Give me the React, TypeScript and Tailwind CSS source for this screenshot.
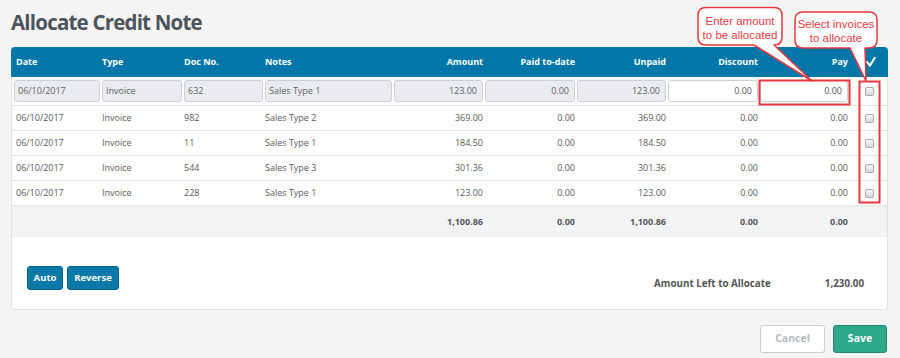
import React from "react";

const rows = [
  ["06/10/2017", "Invoice", "982", "Sales Type 2", "369.00"],
  ["06/10/2017", "Invoice", "11", "Sales Type 1", "184.50"],
  ["06/10/2017", "Invoice", "544", "Sales Type 3", "301.36"],
  ["06/10/2017", "Invoice", "228", "Sales Type 1", "123.00"],
];

const GRID = "grid grid-cols-[88px_82px_81px_129px_91px_92px_91px_92px_90px_1fr]";

function Box() {
  return (
    <div className="w-[9px] h-[9px] rounded-[2px] border border-[#a9a9a9] bg-linear-to-b from-[#f6f6f6] to-[#d8d8d8]" />
  );
}

function Inp({ v, right, white }: { v: string; right?: boolean; white?: boolean }) {
  return (
    <div className="pr-[2px] flex items-center">
      <div
        className={
          "h-[22px] w-full rounded-[3px] border flex items-center text-[9px] " +
          (white ? "bg-white border-[#cfcfcf] text-[#555] " : "bg-[#e9ebee] border-[#ccd1d6] text-[#5f6368] ") +
          (right ? "justify-end pr-[5px]" : "pl-[3px]")
        }
      >
        {v}
      </div>
    </div>
  );
}

export default function App() {
  const red = "#e5393f";
  return (
    <div
      className="relative w-[900px] h-[358px] overflow-hidden bg-[#f4f4f4]"
      style={{ fontFamily: '"Open Sans", "Noto Sans", sans-serif' }}
    >
      <div className="pt-[8px] pl-[11px]">
        <h1 className="text-[20.5px] leading-[28px] font-bold tracking-[-0.8px] text-[#4d545c]">
          Allocate Credit Note
        </h1>
      </div>

      <div className="mt-[11px] ml-[11px] w-[877px] flex flex-col">
        {/* header */}
        <div className={GRID + " h-[30px] items-center bg-[#0077a8] rounded-t-[4px] pl-[3px] text-white text-[9px] font-bold"}>
          <div className="pl-[2px]">Date</div>
          <div>Type</div>
          <div>Doc No.</div>
          <div>Notes</div>
          <div className="text-right pr-[2px]">Amount</div>
          <div className="text-right pr-[2px]">Paid to-date</div>
          <div className="text-right pr-[2px]">Unpaid</div>
          <div className="text-right pr-[2px]">Discount</div>
          <div className="text-right pr-[2px]">Pay</div>
          <div className="pl-[16px] flex items-center">
            <svg width="10" height="10" viewBox="0 0 10 10">
              <path d="M1.3 5.2 L3.8 8.6 L8.8 0.8" fill="none" stroke="white" strokeWidth="2.1" strokeLinecap="round" strokeLinejoin="round" />
            </svg>
          </div>
        </div>

        {/* body */}
        <div className="bg-white border-x border-b border-[#e1e1e1] rounded-b-[4px]">
          <div className={GRID + " h-[29px] items-center pl-[2px] border-b border-[#e4e4e4]"}>
            <Inp v="06/10/2017" />
            <Inp v="Invoice" />
            <Inp v="632" />
            <Inp v="Sales Type 1" />
            <Inp v="123.00" right />
            <Inp v="0.00" right />
            <Inp v="123.00" right />
            <Inp v="0.00" right white />
            <Inp v="0.00" right white />
            <div className="pl-[15px] flex items-center"><Box /></div>
          </div>

          {rows.map((r, i) => (
            <div key={i} className={GRID + " h-[25px] items-center pl-[2px] border-b border-[#e4e4e4] text-[9px] text-[#5a5a5a]"}>
              <div className="pl-[2px]">{r[0]}</div>
              <div>{r[1]}</div>
              <div>{r[2]}</div>
              <div>{r[3]}</div>
              <div className="text-right pr-[2px]">{r[4]}</div>
              <div className="text-right pr-[2px]">0.00</div>
              <div className="text-right pr-[2px]">{r[4]}</div>
              <div className="text-right pr-[2px]">0.00</div>
              <div className="text-right pr-[2px]">0.00</div>
              <div className="pl-[15px] flex items-center"><Box /></div>
            </div>
          ))}

          <div className={GRID + " h-[31px] items-center pl-[2px] bg-[#f2f3f5] text-[9px] font-bold text-[#555]"}>
            <div />
            <div />
            <div />
            <div />
            <div className="text-right pr-[2px]">1,100.86</div>
            <div className="text-right pr-[2px]">0.00</div>
            <div className="text-right pr-[2px]">1,100.86</div>
            <div className="text-right pr-[2px]">0.00</div>
            <div className="text-right pr-[2px]">0.00</div>
            <div />
          </div>

          <div className="h-[72px] flex items-start pt-[29px] pl-[15px] pr-[23px]">
            <div className="flex gap-[4px]">
              <button className="h-[24px] w-[36px] rounded-[3px] bg-[#0a78a8] border border-[#06628b] text-white text-[9.5px] font-bold">
                Auto
              </button>
              <button className="h-[24px] w-[52px] rounded-[3px] bg-[#0a78a8] border border-[#06628b] text-white text-[9.5px] font-bold">
                Reverse
              </button>
            </div>
            <div className="ml-auto mt-[12px] flex items-center gap-[54px] text-[9.8px] leading-[12px] font-bold text-[#555]">
              <span>Amount Left to Allocate</span>
              <span>1,230.00</span>
            </div>
          </div>
        </div>
      </div>

      <div className="mt-[15px] flex justify-end gap-[8px] pr-[13px]">
        <button className="h-[28px] w-[65px] rounded-[3px] bg-white border border-[#c9ced3] text-[#b5bac0] text-[10.5px] font-bold">
          Cancel
        </button>
        <button className="h-[28px] w-[54px] rounded-[3px] bg-[#2ba98a] border border-[#218a70] text-white text-[10.5px] font-bold">
          Save
        </button>
      </div>

      {/* annotations */}
      <svg className="absolute left-0 top-0 pointer-events-none" width="900" height="358" viewBox="0 0 900 358">
        <rect x="759.5" y="80.5" width="90" height="24" fill="none" stroke={red} strokeWidth="2" />
        <rect x="859.5" y="81.5" width="20" height="121" fill="none" stroke={red} strokeWidth="2" />
        <path
          d="M706 7.5 H774 Q782 7.5 782 15.5 V37 Q782 45 774 45 L812 81 L754 45 H706 Q698 45 698 37 V15.5 Q698 7.5 706 7.5 Z"
          fill="white"
          stroke={red}
          strokeWidth="1.5"
          strokeLinejoin="round"
        />
        <path
          d="M803 12 H869 Q877 12 877 20 V40 Q877 48 869 48 H865 L866 81 L850 48 H803 Q795 48 795 40 V20 Q795 12 803 12 Z"
          fill="white"
          stroke={red}
          strokeWidth="1.5"
          strokeLinejoin="round"
        />
        <g fill={red} fontSize="11.5" fontFamily='"Liberation Sans", Arial, sans-serif' textAnchor="middle">
          <text x="740" y="25">Enter amount</text>
          <text x="740" y="38.5">to be allocated</text>
          <text x="836" y="28">Select invoices</text>
          <text x="836" y="41.5">to allocate</text>
        </g>
      </svg>
    </div>
  );
}
